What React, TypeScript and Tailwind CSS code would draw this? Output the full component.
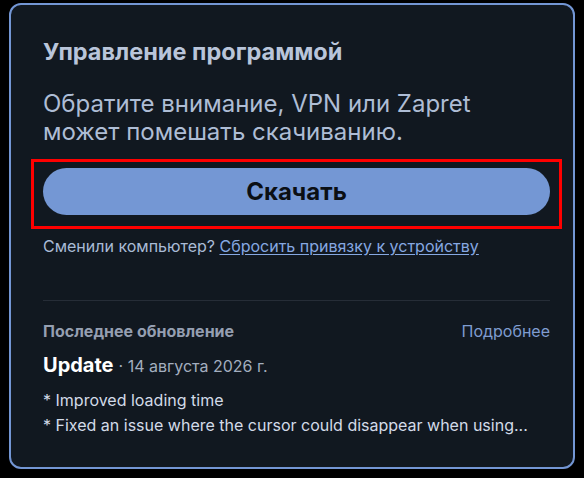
export default function App() {
  return (
    <div
      className="w-[584px] h-[478px] bg-black pt-[3px] pl-[9px]"
      style={{ fontFamily: 'Inter, "Noto Sans", sans-serif' }}
    >
      <section className="w-[566px] h-[466px] rounded-[12px] border-2 border-[#7396d4] bg-[#111820] pl-[32px] pr-[23px] pt-[31px]">
        <h2 className="text-[23.5px] leading-[32px] font-bold text-[#b9c5da]">
          Управление программой
        </h2>
        <p className="mt-[22px] text-[24px] leading-[28px] text-[#aebdd5]">
          Обратите внимание, VPN или Zapret
          <br />
          может помешать скачиванию.
        </p>

        <div className="mt-[13px] -mx-[12px] border-[3px] border-[#ff0000] px-[9px] pt-[6px] pb-[11px]">
          <button className="w-full h-[47px] rounded-full bg-[#7497d4] text-[24px] font-bold text-[#0b0f14]">
            Скачать
          </button>
        </div>

        <p className="mt-[6px] text-[16px] leading-[22px] text-[#a9bbd6]">
          Сменили компьютер?{' '}
          <a href="#" className="text-[#86a8e2] underline underline-offset-2">
            Сбросить привязку к устройству
          </a>
        </p>

        <div className="mt-[43px] h-px bg-[#262d37]" />

        <div className="mt-[20px] flex items-center justify-between">
          <span className="text-[16px] leading-[20px] font-bold text-[#959fb1]">
            Последнее обновление
          </span>
          <a href="#" className="text-[16px] leading-[20px] text-[#7f9cd0]">
            Подробнее
          </a>
        </div>

        <div className="mt-[11px] flex items-baseline gap-[5px]">
          <span className="text-[20px] leading-[26px] font-bold text-white">Update</span>
          <span className="text-[16px] text-[#a3aebf]">· 14 августа 2026 г.</span>
        </div>

        <div className="mt-[10px] text-[16px] leading-[25px] text-[#d3dbe8]">
          <p>* Improved loading time</p>
          <p>* Fixed an issue where the cursor could disappear when using...</p>
        </div>
      </section>
    </div>
  );
}
